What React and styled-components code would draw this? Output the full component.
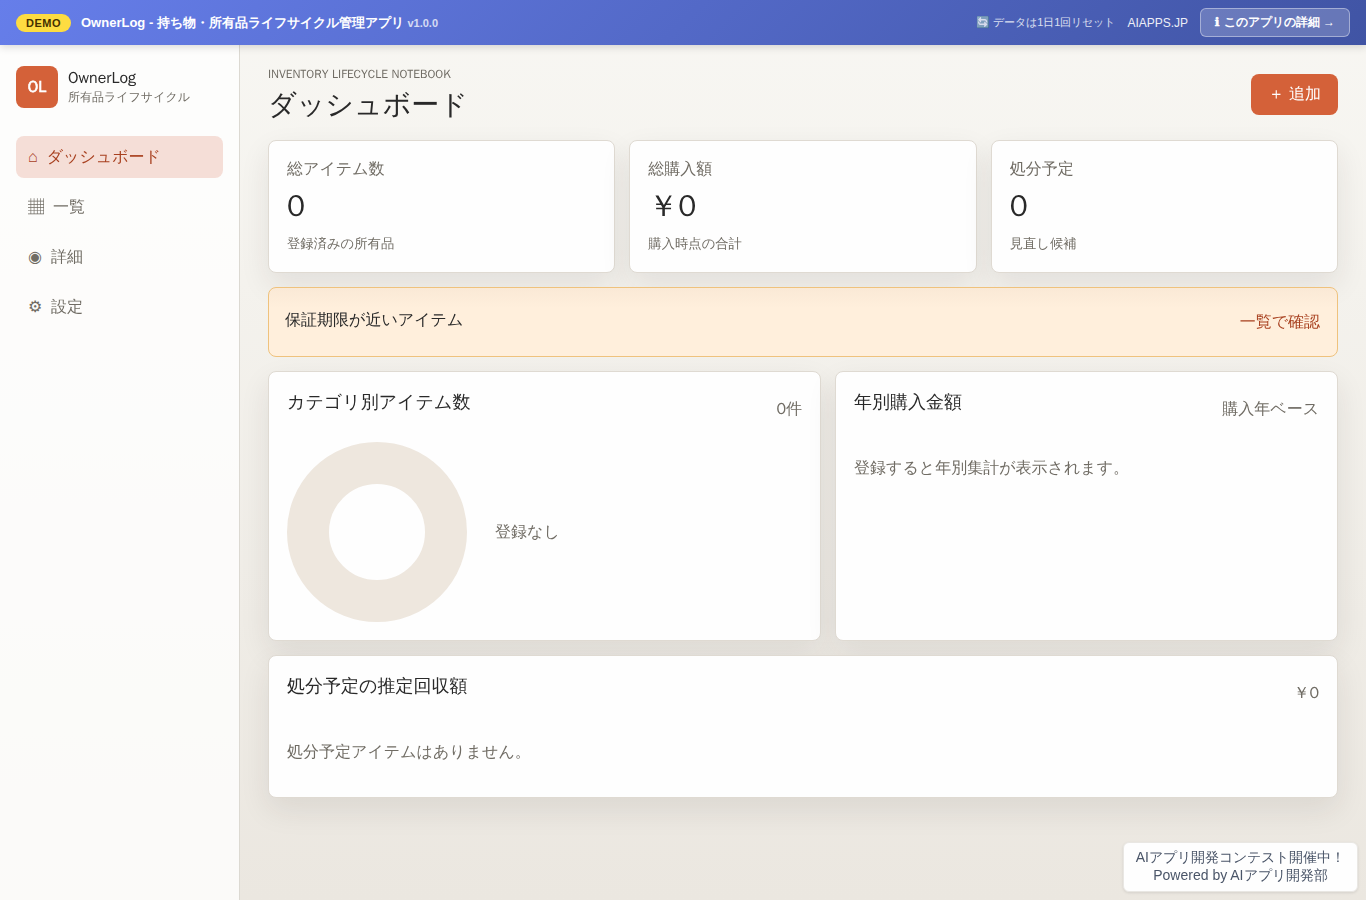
import styled, { createGlobalStyle } from "styled-components";

const navItems = [
  { icon: "⌂", label: "ダッシュボード", active: true },
  { icon: "▦", label: "一覧" },
  { icon: "◉", label: "詳細" },
  { icon: "⚙", label: "設定" },
];

const stats = [
  { label: "総アイテム数", value: "0", note: "登録済みの所有品" },
  { label: "総購入額", value: "￥0", note: "購入時点の合計" },
  { label: "処分予定", value: "0", note: "見直し候補" },
];

const App = () => {
  return (
    <>
      <GlobalStyle />
      <Banner>
        <BannerGroup $gap={10}>
          <DemoBadge>DEMO</DemoBadge>
          <BannerTitle>
            OwnerLog - 持ち物・所有品ライフサイクル管理アプリ <small>v1.0.0</small>
          </BannerTitle>
        </BannerGroup>
        <BannerGroup $gap={12}>
          <ResetNote>🔄 データは1日1回リセット</ResetNote>
          <SiteLink>AIAPPS.JP</SiteLink>
          <DetailLink>
            <InfoSign>ℹ</InfoSign> このアプリの詳細 →
          </DetailLink>
        </BannerGroup>
      </Banner>
      <Shell>
        <Sidebar>
          <Brand>
            <BrandMark>OL</BrandMark>
            <div>
              <BrandName>OwnerLog</BrandName>
              <BrandSub>所有品ライフサイクル</BrandSub>
            </div>
          </Brand>
          <Nav>
            {navItems.map((item) => (
              <NavItem key={item.label} $active={item.active}>
                <NavIcon $symbol={item.icon === "◉"}>{item.icon}</NavIcon>
                {item.label}
              </NavItem>
            ))}
          </Nav>
        </Sidebar>
        <Main>
          <TopBar>
            <div>
              <Eyebrow>INVENTORY LIFECYCLE NOTEBOOK</Eyebrow>
              <h1>ダッシュボード</h1>
            </div>
            <AddButton>＋ 追加</AddButton>
          </TopBar>
          <Stats>
            {stats.map((stat) => (
              <StatCard key={stat.label}>
                <p>{stat.label}</p>
                <strong>{stat.value}</strong>
                <small>{stat.note}</small>
              </StatCard>
            ))}
          </Stats>
          <Notice>
            <h2>保証期限が近いアイテム</h2>
            <a>一覧で確認</a>
          </Notice>
          <Charts>
            <Panel>
              <PanelHead>
                <h2>カテゴリ別アイテム数</h2>
                <span>0件</span>
              </PanelHead>
              <DonutRow>
                <Donut />
                <span>登録なし</span>
              </DonutRow>
            </Panel>
            <Panel>
              <PanelHead>
                <h2>年別購入金額</h2>
                <span>購入年ベース</span>
              </PanelHead>
              <Empty>登録すると年別集計が表示されます。</Empty>
            </Panel>
          </Charts>
          <Panel>
            <PanelHead>
              <h2>処分予定の推定回収額</h2>
              <span>￥0</span>
            </PanelHead>
            <Empty>処分予定アイテムはありません。</Empty>
          </Panel>
        </Main>
      </Shell>
      <Contest>
        AIアプリ開発コンテスト開催中！
        <br />
        Powered by AIアプリ開発部
      </Contest>
    </>
  );
};

const GlobalStyle = createGlobalStyle`
  * {
    box-sizing: border-box;
  }

  body {
    margin: 0;
    color: #292929;
    background: linear-gradient(180deg, #f8f7f3 0%, #ebe7e0 100%);
    font-family: "WenQuanYi Zen Hei", "Noto Sans CJK JP", sans-serif;
    font-size: 16px;
    line-height: 1.5;
  }

  h1, h2, p {
    margin: 0;
    font-weight: 400;
  }
`;

const Banner = styled.header`
  position: relative;
  z-index: 2;
  display: flex;
  align-items: center;
  justify-content: space-between;
  height: 45px;
  padding: 0 16px;
  color: #fff;
  background: linear-gradient(135deg, #667eea 0%, #4054a4 100%);
  box-shadow: 0 2px 8px rgba(0, 0, 0, 0.15);
  font-family: "Liberation Sans", sans-serif;
`;

const BannerGroup = styled.div`
  display: flex;
  align-items: center;
  gap: ${({ $gap }) => $gap}px;
`;

const DemoBadge = styled.span`
  padding: 3px 10px;
  border-radius: 20px;
  background: #fddc41;
  color: #442f00;
  font-size: 11px;
  font-weight: 700;
  line-height: 12px;
  letter-spacing: 0.5px;
`;

const BannerTitle = styled.span`
  font-size: 13px;
  font-weight: 700;

  small {
    font-size: 11px;
    opacity: 0.75;
  }
`;

const ResetNote = styled.span`
  font-size: 11px;
  opacity: 0.8;
`;

const SiteLink = styled.a`
  font-size: 12px;
  opacity: 0.9;
`;

const DetailLink = styled.a`
  padding: 5px 14px;
  border: 1px solid rgba(255, 255, 255, 0.4);
  border-radius: 6px;
  background: rgba(255, 255, 255, 0.2);
  font-size: 12px;
  font-weight: 700;
  line-height: 17px;
`;

const InfoSign = styled.span`
  margin-right: 0.7px;
  font-family: "DejaVu Sans", sans-serif;
  line-height: 1;
  -webkit-text-stroke: 0.6px #fff;
`;

const Shell = styled.div`
  display: grid;
  grid-template-columns: 240px 1fr;
  height: 855px;
`;

const Sidebar = styled.aside`
  padding: 21px 16px;
  border-right: 1px solid #dcd9d2;
  background: rgba(255, 255, 255, 0.78);
`;

const Brand = styled.div`
  display: flex;
  align-items: center;
  gap: 10px;
  margin-bottom: 28px;
`;

const BrandMark = styled.div`
  display: grid;
  place-items: center;
  width: 42px;
  height: 42px;
  border-radius: 8px;
  background: #d46139;
  color: #fff;
  -webkit-text-stroke: 0.6px #fff;
`;

const BrandName = styled.div`
  line-height: 20px;
`;

const BrandSub = styled.div`
  color: #706c64;
  font-size: 12px;
  line-height: 18px;
`;

const Nav = styled.nav`
  display: grid;
  gap: 8px;
`;

const NavItem = styled.a`
  display: flex;
  align-items: center;
  gap: 9px;
  height: 42px;
  padding: 0 12px;
  border-radius: 8px;
  background: ${({ $active }) => ($active ? "#f5ded7" : "transparent")};
  color: ${({ $active }) => ($active ? "#a8401f" : "#706c64")};
`;

const NavIcon = styled.span`
  font-family: ${({ $symbol }) => ($symbol ? '"DejaVu Sans", sans-serif' : "inherit")};
`;

const Main = styled.main`
  display: flex;
  flex-direction: column;
  gap: 14px;
  padding: 20px 28px;
`;

const TopBar = styled.div`
  display: flex;
  align-items: center;
  justify-content: space-between;
  height: 61px;

  h1 {
    font-size: 28px;
    line-height: 42px;
  }
`;

const Eyebrow = styled.p`
  padding-bottom: 1px;
  color: #706c64;
  font-size: 12px;
  line-height: 18px;
`;

const AddButton = styled.button`
  height: 41px;
  margin-bottom: 3px;
  padding: 0 17px 1px;
  border: 0;
  border-radius: 8px;
  background: #d46139;
  color: #fff;
  font: inherit;
`;

const Panel = styled.section`
  padding: 18px;
  border: 1px solid #dfdad2;
  border-radius: 8px;
  background: #fefefe;
  box-shadow: 0 12px 30px rgba(40, 38, 30, 0.09);
`;

const Stats = styled.div`
  display: grid;
  grid-template-columns: repeat(3, 1fr);
  gap: 14px;
`;

const StatCard = styled(Panel)`
  height: 133px;
  padding-top: 16px;

  p {
    color: #706c64;
    line-height: 24px;
  }

  strong {
    display: block;
    font-size: 30px;
    font-weight: 400;
    line-height: 50px;
  }

  small {
    display: block;
    color: #706c64;
    font-size: 13.33px;
    line-height: 26px;
  }
`;

const Notice = styled.section`
  display: flex;
  align-items: center;
  justify-content: space-between;
  height: 70px;
  padding: 0 17px 0 16px;
  border: 1px solid #efc27d;
  border-radius: 8px;
  background: linear-gradient(180deg, #fae9d6 0, #ffefdc 20px);

  h2 {
    font-size: 16px;
    padding-bottom: 4px;
  }

  a {
    color: #a8401f;
  }
`;

const Charts = styled.div`
  display: grid;
  grid-template-columns: 553fr 503fr;
  gap: 14px;

  & > section {
    height: 270px;
  }
`;

const PanelHead = styled.div`
  display: flex;
  align-items: center;
  justify-content: space-between;
  height: 38px;

  h2 {
    padding-bottom: 14px;
    font-size: 18px;
    line-height: 24px;
  }

  span {
    color: #706c64;
  }
`;

const DonutRow = styled.div`
  display: flex;
  align-items: center;
  gap: 28px;
  margin-top: 14px;
  color: #706c64;
`;

const Donut = styled.div`
  width: 180px;
  height: 180px;
  border: 42px solid #eee7de;
  border-radius: 50%;
`;

const Empty = styled.p`
  padding: 28px 0 15px;
  color: #706c64;
`;

const Contest = styled.aside`
  position: fixed;
  right: 8px;
  bottom: 8px;
  z-index: 3;
  padding: 5px 12px 7px;
  border: 1px solid #e9e7e3;
  border-radius: 6px;
  background: #fefefe;
  box-shadow: 0 1px 3px rgba(0, 0, 0, 0.1);
  color: #4a5568;
  font-family: "Liberation Sans", sans-serif;
  font-size: 14px;
  line-height: 18px;
  text-align: center;
`;

export default App;
